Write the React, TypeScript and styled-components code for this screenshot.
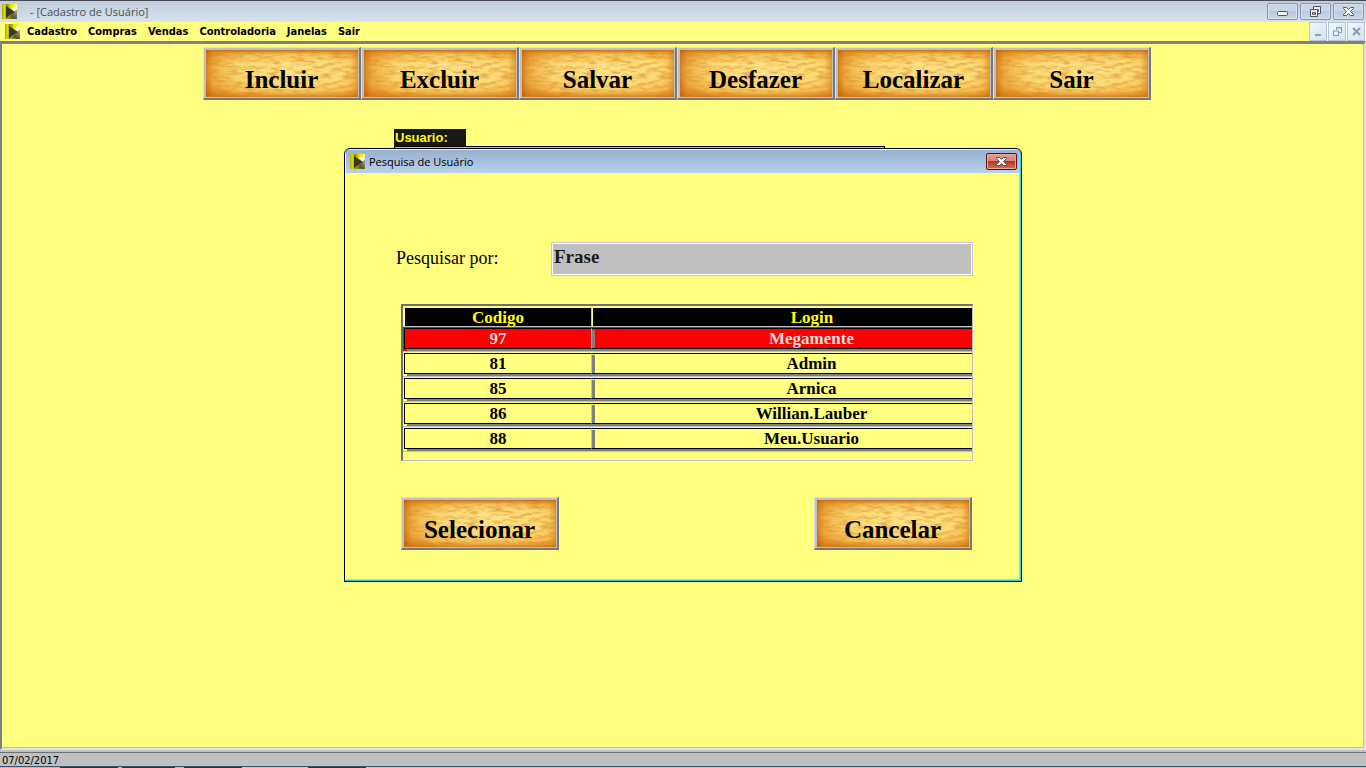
import React, { useId } from "react";
import styled, { createGlobalStyle } from "styled-components";

const YELLOW = "#ffff80";
const SILVER = "#c0c0c0";
const SERIF = `"Liberation Serif", "Times New Roman", serif`;
const CAPTION = `"Open Sans", "Noto Sans", sans-serif`;
const TAHOMA = `"DejaVu Sans Condensed", "DejaVu Sans", sans-serif`;

const GlobalStyle = createGlobalStyle`
  *, *::before, *::after { box-sizing: border-box; }
  body { margin: 0; background: ${YELLOW}; }
  button, input { margin: 0; font: inherit; border-radius: 0; }
`;

const Page = styled.div`
  display: flex;
  flex-direction: column;
  height: 100vh;
  overflow: hidden;
  color: #000;
  font: 11px ${TAHOMA};
`;

const TitleBar = styled.header`
  display: flex;
  align-items: center;
  height: 22px;
  flex: none;
  padding: 0 2px 0 1px;
  border-top: 1px solid #4a4a50;
  background: linear-gradient(#c0cddc, #d5e1ee);
`;

const TitleText = styled.h1`
  flex: 1;
  margin: 0 0 0 12px;
  font: 11px/20px ${CAPTION};
  color: #4c4f55;
`;

const WindowButtons = styled.div`
  display: flex;
  gap: 2px;
`;

const WindowButton = styled.button`
  display: flex;
  align-items: center;
  justify-content: center;
  width: 31px;
  height: 17px;
  padding: 0;
  border: 1px solid #8493b2;
  border-radius: 2px;
  background: linear-gradient(#c8d5e4 50%, #b9c8da 50%, #cbd8e7);
  box-shadow: inset 0 0 0 1px #d7e2ee;
`;

const MenuBar = styled.nav`
  display: flex;
  align-items: center;
  height: 19px;
  flex: none;
  padding-left: 4px;
  background: ${YELLOW};
`;

const MenuLinks = styled.div`
  display: flex;
  flex: 1;
  gap: 11px;
  margin-left: 6px;
`;

const MenuLink = styled.a`
  color: #000;
  font-weight: bold;
  line-height: 16px;
  text-decoration: none;
`;

const ChildButtons = styled.div`
  display: flex;
  gap: 1px;
  padding: 0 1px 0 0;
  background: #fff;
`;

const ChildButton = styled.button`
  display: flex;
  align-items: center;
  justify-content: center;
  width: 18px;
  height: 19px;
  padding: 0;
  border: 1px solid #b4c5d6;
  background: linear-gradient(135deg, #f1f6fb, #d5e3f0);
`;

const Client = styled.main`
  position: relative;
  flex: 1;
  min-height: 0;
  border: solid;
  border-width: 3px 2px 2px;
  border-color: #808080 #e0e0e0 #e3e3e3 #808080;
  background: ${YELLOW};
  box-shadow: inset -1px -1px ${SILVER};
`;

const Toolbar = styled.div`
  display: flex;
  justify-content: center;
  padding: 3px 12px 0 0;
`;

const FancyButton = styled.button`
  position: relative;
  width: 158px;
  height: 53px;
  padding: 13px 0 0;
  border: solid;
  border-width: 1px 2px 2px 1px;
  border-color: #dedede #787878 #787878 #dedede;
  background: #eeb040;
  color: #000;
  font: bold 25px/28px ${SERIF};
`;

const Parchment = styled.svg`
  position: absolute;
  inset: 0;
  width: 100%;
  height: 100%;
  border: solid ${SILVER};
  border-width: 2px 1px 1px 2px;
`;

const ButtonLabel = styled.span`
  position: relative;
`;

const UserForm = styled.form`
  display: flex;
  flex-direction: column;
  align-items: flex-start;
  width: 491px;
  margin: 29px 0 0 392px;
`;

const UserLabel = styled.label`
  width: 72px;
  background: #181818;
  color: #ffff00;
  font: bold 13px/17px "Liberation Sans", Arial, sans-serif;
  padding-left: 1px;
`;

const UserInput = styled.input`
  width: 100%;
  height: 24px;
  border: 1px solid #000;
  background: ${SILVER};
`;

const DialogLayer = styled.div`
  position: absolute;
  inset: 0;
  display: flex;
  align-items: flex-start;
  justify-content: center;
  padding-top: 104px;
`;

const Dialog = styled.section`
  width: 678px;
  border: 1px solid #000;
  border-radius: 6px 6px 0 0;
  background: ${YELLOW};
  box-shadow: inset -1px -1px #2ed3e6, inset 1px 1px #eef4fa, inset -2px -2px #a9cfdc;
  overflow: hidden;
`;

const DialogTitle = styled.header`
  display: flex;
  align-items: center;
  height: 23px;
  margin: 1px 2px 0 1px;
  padding: 0 2px 0 3px;
  background: linear-gradient(#98b1d0, #b9d0e9);

  h2 {
    flex: 1;
    margin: 0 0 0 3px;
    font: 11px/20px ${CAPTION};
  }
`;

const CloseButton = styled(WindowButton)`
  height: 17px;
  border-color: #52161b;
  background: linear-gradient(#e3a093, #d77f70 48%, #b93821 50%, #d4705c);
  box-shadow: inset 0 0 0 1px #e7a89c;
`;

const DialogBody = styled.div`
  display: flex;
  flex-direction: column;
  padding: 69px 48px 31px 56px;
`;

const SearchRow = styled.div`
  display: grid;
  grid-template-columns: 155px 1fr;
  align-items: center;
  margin-left: -5px;
  font: 18px/22px ${SERIF};

  label { padding-bottom: 2px; }
`;

const SearchInput = styled.input`
  width: 100%;
  height: 34px;
  padding: 0 2px 4px;
  border: 1px solid #c8c8d0;
  box-shadow: inset 0 0 0 1px #fff;
  background: ${SILVER};
  color: #1a1a1a;
  font: bold 19px/24px ${SERIF};
  outline: none;
`;

const GridFrame = styled.div`
  height: 157px;
  margin: 28px 0 36px;
  border: solid;
  border-width: 2px 1px 1px 2px;
  border-color: #707070 ${SILVER} ${SILVER} #707070;
  overflow: hidden;
`;

const Grid = styled.table`
  width: 628px;
  table-layout: fixed;
  border-collapse: separate;
  border-spacing: 0;
  font: bold 17px/19px ${SERIF};

  th, td { padding: 0; text-align: center; }
`;

const CodeColumn = styled.col`
  width: 189px;
`;

const HeadCell = styled.th`
  height: 21px;
  border-bottom: 1px solid ${SILVER};
`;

const HeadLabel = styled.span<{ $first?: boolean }>`
  display: block;
  height: 18px;
  margin: 2px 0 0 ${(p) => (p.$first ? 2 : 1)}px;
  border-right: ${(p) => (p.$first ? `1px solid ${SILVER}` : "0")};
  background: #000;
  color: #ffff00;
`;

const Row = styled.tr<{ $selected?: boolean }>`
  background: ${(p) => (p.$selected ? "#ff0000" : YELLOW)};
  color: ${(p) => (p.$selected ? "#dedede" : "#000")};
`;

const Cell = styled.td`
  height: 25px;
  border-bottom: 1px solid ${SILVER};
`;

const CellBox = styled.span<{ $first?: boolean }>`
  display: block;
  height: 21px;
  margin: 1px 0 2px ${(p) => (p.$first ? 1 : 0)}px;
  border: solid #000;
  border-width: 1px 0;
  border-left-width: ${(p) => (p.$first ? 1 : 0)}px;
  border-right: ${(p) => (p.$first ? `1px solid ${SILVER}` : "0")};
  box-shadow: ${(p) => (p.$first ? 3 : 0)}px 2px #808080;
`;

const DialogActions = styled.div`
  display: flex;
  justify-content: space-between;
  padding-right: 1px;
`;

const StatusBar = styled.footer`
  flex: none;
  height: 17px;
  border-top: 2px solid ${SILVER};
  border-bottom: 1px solid #40506a;
  background: ${SILVER};
  box-shadow: inset 0 1px #707070;
  padding-left: 2px;
  line-height: 17px;
`;

const TaskEdge = styled.div`
  flex: none;
  height: 1px;
  background: linear-gradient(90deg, #a9bdd2 60px, #333 60px, #333 118px, #a9bdd2 118px, #a9bdd2 122px,
    #333 122px, #333 175px, #a9bdd2 175px, #a9bdd2 184px, #333 184px, #333 242px,
    #b4cbe2 242px, #b4cbe2 308px, #333 308px, #333 366px, #b4cbe2 366px);
`;

function AppIcon() {
  const id = useId();
  return (
    <svg width="17" height="16" viewBox="0 0 17 16" aria-hidden="true">
      <defs>
        <linearGradient id={id}>
          <stop offset="0" stopColor="#a8a808" />
          <stop offset="0.15" stopColor="#e0e000" />
          <stop offset="0.35" stopColor="#8a8a10" />
          <stop offset="0.6" stopColor="#e8e800" />
          <stop offset="1" stopColor="#ffff30" />
        </linearGradient>
        <linearGradient id={`${id}b`} x1="0" y1="1" x2="1" y2="0">
          <stop offset="0" stopColor="#b0b000" />
          <stop offset="0.4" stopColor="#55552c" />
          <stop offset="1" stopColor="#b8b8a0" />
        </linearGradient>
      </defs>
      <path d="M1 0h15v15H1z" fill={`url(#${id})`} />
      <path d="M11 4l5-3v5l-3 2z" fill="#ffffe8" />
      <path d="M6 15l7-7 3-3v10z" fill={`url(#${id}b)`} />
      <path d="M5 2l9 6-9 6z" fill="#37372c" />
    </svg>
  );
}

function MinimizeGlyph() {
  return (
    <svg width="13" height="13" viewBox="0 0 13 13" aria-hidden="true">
      <rect x="1.5" y="6.5" width="10" height="4" rx="1" fill="#f4f4f4" stroke="#555463" />
    </svg>
  );
}

function RestoreGlyph() {
  return (
    <svg width="13" height="13" viewBox="0 0 13 13" aria-hidden="true">
      <g fill="#f4f4f4" stroke="#555463">
        <path d="M4.500 1.500h7v7h-7z" />
        <path d="M6.500 4.500h3v2h-3z" fill="#b9c8da" />
        <path d="M1.500 4.500h7v7h-7z" />
        <path d="M3.500 7.500h3v2h-3z" fill="#b9c8da" />
      </g>
    </svg>
  );
}

function CloseGlyph() {
  return (
    <svg width="13" height="11" viewBox="0 0 13 11" aria-hidden="true">
      <path
        d="M1.500 1.500h3l2 2 2-2h3v1l-3 3 3 3v1h-3l-2-2-2 2h-3v-1l3-3-3-3z"
        fill="#f6f6f6"
        stroke="#555463"
      />
    </svg>
  );
}

function ChildGlyph({ kind }: { kind: "min" | "restore" | "close" }) {
  const paths = {
    min: "M2 9h6",
    restore: "M4 2h6M4 1.500h6M9.500 2v5M7 6.500h3M4.500 2v2M1 5h6M1.500 5v5M6.500 5v5M1 9.500h6",
    close: "M2 2l7 7M9 2l-7 7",
  };
  return (
    <svg width="11" height="11" viewBox="0 0 11 11" aria-hidden="true">
      <path d={paths[kind]} fill="none" stroke="#8a9dae" strokeWidth={kind === "restore" ? 1 : 2} />
    </svg>
  );
}

function ParchmentButton({ children }: { children: string }) {
  const id = useId();
  return (
    <FancyButton type="button">
      <Parchment viewBox="0 0 152 48" preserveAspectRatio="none" aria-hidden="true">
        <defs>
          <radialGradient id={`${id}g`} cx="0.56" cy="0.45" r="0.72">
            <stop offset="0" stopColor="#fde488" />
            <stop offset="0.5" stopColor="#fbda76" />
            <stop offset="0.8" stopColor="#f3b548" />
            <stop offset="1" stopColor="#d87f1e" />
          </radialGradient>
          <linearGradient id={`${id}e`} x1="0" y1="0" x2="0" y2="1">
            <stop offset="0" stopColor="#b0520a" stopOpacity="0.8" />
            <stop offset="0.1" stopColor="#dc8a20" stopOpacity="0.25" />
            <stop offset="0.25" stopColor="#dc8a20" stopOpacity="0" />
            <stop offset="0.85" stopColor="#dc8a20" stopOpacity="0" />
            <stop offset="1" stopColor="#c4640c" stopOpacity="0.6" />
          </linearGradient>
          <linearGradient id={`${id}s`}>
            <stop offset="0" stopColor="#b0520a" stopOpacity="0.6" />
            <stop offset="0.05" stopColor="#dc8a20" stopOpacity="0.3" />
            <stop offset="0.22" stopColor="#dc8a20" stopOpacity="0" />
            <stop offset="0.95" stopColor="#dc8a20" stopOpacity="0" />
            <stop offset="1" stopColor="#c4640c" stopOpacity="0.5" />
          </linearGradient>
          <filter
            id={`${id}n`}
            x="0"
            y="0"
            width="100%"
            height="100%"
            colorInterpolationFilters="sRGB"
          >
            <feTurbulence type="fractalNoise" baseFrequency="0.08 0.3" numOctaves="5" seed="7" />
            <feColorMatrix values="0 0 0 0 0.86  0 0 0 0 0.52  0 0 0 0 0.1  1.5 0 0 0 -0.62" />
          </filter>
        </defs>
        <rect width="152" height="48" fill={`url(#${id}g)`} />
        <rect width="152" height="48" fill={`url(#${id}e)`} />
        <rect width="152" height="48" fill={`url(#${id}s)`} />
        <rect width="152" height="48" filter={`url(#${id}n)`} />
      </Parchment>
      <ButtonLabel>{children}</ButtonLabel>
    </FancyButton>
  );
}

const menus = ["Cadastro", "Compras", "Vendas", "Controladoria", "Janelas", "Sair"];
const actions = ["Incluir", "Excluir", "Salvar", "Desfazer", "Localizar", "Sair"];
const users = [
  { code: 97, login: "Megamente" },
  { code: 81, login: "Admin" },
  { code: 85, login: "Arnica" },
  { code: 86, login: "Willian.Lauber" },
  { code: 88, login: "Meu.Usuario" },
];

export default function App() {
  return (
    <Page>
      <GlobalStyle />
      <TitleBar>
        <AppIcon />
        <TitleText>- [Cadastro de Usuário]</TitleText>
        <WindowButtons>
          <WindowButton type="button" aria-label="Minimizar"><MinimizeGlyph /></WindowButton>
          <WindowButton type="button" aria-label="Restaurar"><RestoreGlyph /></WindowButton>
          <WindowButton type="button" aria-label="Fechar"><CloseGlyph /></WindowButton>
        </WindowButtons>
      </TitleBar>
      <MenuBar>
        <AppIcon />
        <MenuLinks>
          {menus.map((m) => <MenuLink key={m} href="#">{m}</MenuLink>)}
        </MenuLinks>
        <ChildButtons>
          <ChildButton type="button" aria-label="Minimizar janela"><ChildGlyph kind="min" /></ChildButton>
          <ChildButton type="button" aria-label="Restaurar janela"><ChildGlyph kind="restore" /></ChildButton>
          <ChildButton type="button" aria-label="Fechar janela"><ChildGlyph kind="close" /></ChildButton>
        </ChildButtons>
      </MenuBar>
      <Client>
        <Toolbar>
          {actions.map((a) => <ParchmentButton key={a}>{a}</ParchmentButton>)}
        </Toolbar>
        <UserForm>
          <UserLabel htmlFor="usuario">Usuario:</UserLabel>
          <UserInput id="usuario" />
        </UserForm>
        <DialogLayer>
          <Dialog role="dialog" aria-labelledby="dialog-title">
            <DialogTitle>
              <AppIcon />
              <h2 id="dialog-title">Pesquisa de Usuário</h2>
              <CloseButton type="button" aria-label="Fechar pesquisa"><CloseGlyph /></CloseButton>
            </DialogTitle>
            <DialogBody>
              <SearchRow>
                <label htmlFor="frase">Pesquisar por:</label>
                <SearchInput id="frase" defaultValue="Frase" />
              </SearchRow>
              <GridFrame>
                <Grid>
                  <colgroup>
                    <CodeColumn />
                    <col />
                  </colgroup>
                  <thead>
                    <tr>
                      <HeadCell><HeadLabel $first>Codigo</HeadLabel></HeadCell>
                      <HeadCell><HeadLabel>Login</HeadLabel></HeadCell>
                    </tr>
                  </thead>
                  <tbody>
                    {users.map((u, i) => (
                      <Row key={u.code} $selected={i === 0}>
                        <Cell><CellBox $first>{u.code}</CellBox></Cell>
                        <Cell><CellBox>{u.login}</CellBox></Cell>
                      </Row>
                    ))}
                  </tbody>
                </Grid>
              </GridFrame>
              <DialogActions>
                <ParchmentButton>Selecionar</ParchmentButton>
                <ParchmentButton>Cancelar</ParchmentButton>
              </DialogActions>
            </DialogBody>
          </Dialog>
        </DialogLayer>
      </Client>
      <StatusBar>07/02/2017</StatusBar>
      <TaskEdge />
    </Page>
  );
}
